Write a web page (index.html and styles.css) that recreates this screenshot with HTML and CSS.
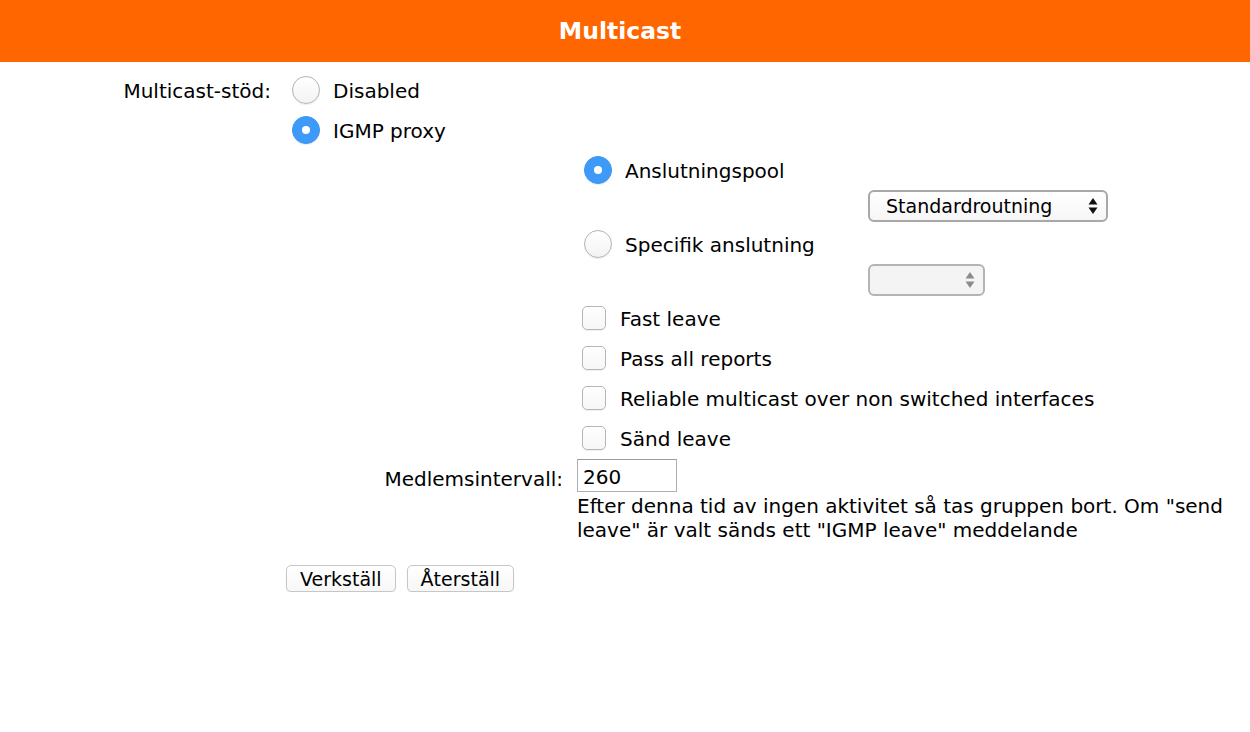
FILE: index.html
```html
<!DOCTYPE html>
<html lang="sv">
<head>
  <meta charset="UTF-8" />
  <title>Multicast</title>
  <link rel="stylesheet" href="styles.css">
</head>
<body>
  <header class="title-bar">
    <h1>Multicast</h1>
  </header>

  <form class="settings">
    <div class="field">
      <div class="field-label">Multicast-stöd:</div>
      <div class="field-body">
        <label class="row">
          <input type="radio" name="mode" class="radio">
          <span>Disabled</span>
        </label>
        <label class="row">
          <input type="radio" name="mode" class="radio" checked>
          <span>IGMP proxy</span>
        </label>

        <div class="proxy">
          <div class="proxy-opts">
            <label class="row sub">
              <input type="radio" name="iface" class="radio" checked>
              <span>Anslutningspool</span>
            </label>
            <div class="select-row">
              <div class="select wide">
                <span>Standardroutning</span>
                <svg class="arrows" width="10" height="18" viewBox="0 0 10 18"><path d="M5 1 L9.5 7.5 L0.5 7.5 Z M5 17 L9.5 10.5 L0.5 10.5 Z" fill="#111"/></svg>
              </div>
            </div>
            <label class="row sub">
              <input type="radio" name="iface" class="radio">
              <span>Specifik anslutning</span>
            </label>
            <div class="select-row">
              <div class="select narrow off">
                <span></span>
                <svg class="arrows" width="10" height="18" viewBox="0 0 10 18"><path d="M5 1 L9.5 7.5 L0.5 7.5 Z M5 17 L9.5 10.5 L0.5 10.5 Z" fill="#8c8c8c"/></svg>
              </div>
            </div>

            <label class="row check"><input type="checkbox" class="box"><span>Fast leave</span></label>
            <label class="row check"><input type="checkbox" class="box"><span>Pass all reports</span></label>
            <label class="row check"><input type="checkbox" class="box"><span>Reliable multicast over non switched interfaces</span></label>
            <label class="row check"><input type="checkbox" class="box"><span>Sänd leave</span></label>
          </div>

          <div class="interval">
            <label class="interval-label" for="interval">Medlemsintervall:</label>
            <div class="interval-body">
              <input type="text" id="interval" class="text-input" value="260">
              <p class="help">Efter denna tid av ingen aktivitet så tas gruppen bort. Om "send leave" är valt sänds ett "IGMP leave" meddelande</p>
            </div>
          </div>
        </div>

        <div class="actions">
          <button type="button" class="btn">Verkställ</button>
          <button type="button" class="btn">Återställ</button>
        </div>
      </div>
    </div>
  </form>
</body>
</html>
```

FILE: styles.css
```css
body {
  margin: 0;
  background: #fff;
  color: #000;
  font-family: "DejaVu Sans", Verdana, sans-serif;
  font-size: 20px;
}
.title-bar {
  background-color: #ff6600;
  height: 62px;
  display: flex;
  align-items: center;
  justify-content: center;
  padding-right: 10px;
}
.title-bar h1 {
  margin: 0;
  color: #fff;
  font-size: 23.5px;
  font-weight: bold;
}
.settings {
  margin-top: 8px;
}
.field {
  display: grid;
  grid-template-columns: 271px 1fr;
  column-gap: 15px;
}
.field-label {
  text-align: right;
  line-height: 40px;
  padding-top: 1px;
}
.row {
  height: 40px;
  display: flex;
  align-items: center;
  gap: 13px;
}
.row span {
  padding-top: 2px;
}
.row .radio {
  margin-left: 6px;
}
.row.sub .radio {
  margin-left: 7px;
}
.radio {
  appearance: none;
  -webkit-appearance: none;
  width: 28px;
  height: 28px;
  margin: 0;
  border-radius: 50%;
  border: 1px solid #b4b4b4;
  background: linear-gradient(#fff, #f3f3f3);
  box-shadow: 0 1px 1px rgba(0, 0, 0, 0.08);
  position: relative;
  flex: none;
}
.radio:checked {
  border-color: #3a96f6;
  background: #3d9af8;
}
.radio:checked::after {
  content: "";
  position: absolute;
  left: 50%;
  top: 50%;
  width: 8px;
  height: 8px;
  margin: -4px 0 0 -4px;
  border-radius: 50%;
  background: #fff;
}
.proxy {
  display: grid;
  grid-template-columns: 291px 1fr;
}
.proxy-opts {
  grid-column: 2;
}
.select-row {
  height: 34px;
  padding-left: 291px;
}
.select {
  height: 32px;
  box-sizing: border-box;
  border: 2px solid #a8a8a8;
  border-radius: 6px;
  background: linear-gradient(#fff, #f6f6f6);
  display: flex;
  align-items: center;
  justify-content: space-between;
  padding: 0 8px 0 16px;
  font-size: 19px;
}
.select.wide {
  width: 240px;
}
.select.narrow {
  width: 117px;
}
.select.off {
  background: #f4f4f4;
  border-color: #b4b4b4;
}
.row.check {
  gap: 14px;
}
.box {
  appearance: none;
  -webkit-appearance: none;
  width: 24px;
  height: 24px;
  margin: 0 0 0 5px;
  border: 1px solid #b6b6b6;
  border-radius: 5px;
  background: linear-gradient(#fff, #f6f6f6);
  box-shadow: 0 1px 1px rgba(0, 0, 0, 0.06);
  flex: none;
}
.interval {
  grid-column: 1 / 3;
  display: grid;
  grid-template-columns: 291px 1fr;
}
.interval-label {
  text-align: right;
  padding-right: 14px;
  padding-top: 2px;
  line-height: 38px;
}
.text-input {
  display: block;
  width: 100px;
  height: 33px;
  margin-top: 1px;
  box-sizing: border-box;
  border: 1px solid #b0b0b0;
  border-top-color: #9c9c9c;
  padding: 2px 5px 0;
  font-family: inherit;
  font-size: 20px;
  color: #000;
}
.help {
  margin: 2px 0 0;
  line-height: 24px;
  max-width: 660px;
}
.actions {
  display: flex;
  gap: 11px;
  margin-top: 23px;
}
.btn {
  height: 27px;
  padding: 0 13px;
  background: linear-gradient(#fff, #f7f7f7);
  border: 1px solid #c6c6c6;
  border-radius: 5px;
  box-shadow: 0 1px 1px rgba(0, 0, 0, 0.1);
  font-family: inherit;
  font-size: 19px;
  color: #000;
}
```
